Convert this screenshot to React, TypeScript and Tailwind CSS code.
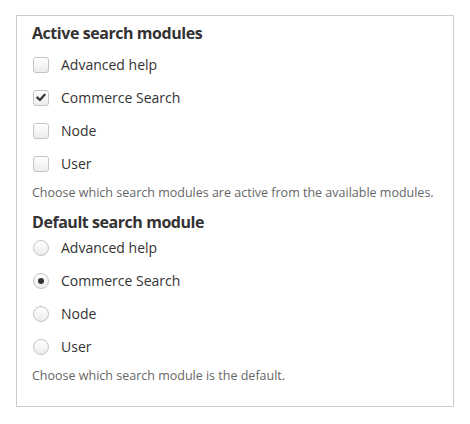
import React from "react";

function Checkbox({ checked }: { checked?: boolean }) {
  return (
    <span className="flex h-[16px] w-[16px] shrink-0 items-center justify-center rounded-[3px] border border-[#c4c4c4] bg-gradient-to-b from-[#ffffff] to-[#ececec] shadow-[inset_0_1px_0_#fff]">
      {checked && (
        <svg width="10" height="9" viewBox="0 0 10 9">
          <path d="M1.4 4.6 L3.9 7 L8.6 1.8" fill="none" stroke="#3a3a3a" strokeWidth="2.4" strokeLinecap="round" strokeLinejoin="round" />
        </svg>
      )}
    </span>
  );
}

function Radio({ checked }: { checked?: boolean }) {
  return (
    <span className="flex h-[16px] w-[16px] shrink-0 items-center justify-center rounded-full border border-[#c4c4c4] bg-gradient-to-b from-[#ffffff] to-[#ececec]">
      {checked && <span className="h-[6px] w-[6px] rounded-full bg-[#333]" />}
    </span>
  );
}

const items = ["Advanced help", "Commerce Search", "Node", "User"];

export default function App() {
  return (
    <div className="h-[424px] w-[470px] bg-white pl-[16px] pt-[15px]" style={{ fontFamily: '"Open Sans", sans-serif' }}>
      <div className="flex w-[438px] flex-col border border-[#cccccc] pb-[21px] pl-[15px] pt-[6px] text-[#333]">
        <div className="h-[22px] text-[16px] font-bold leading-[22px] tracking-[-0.45px]">Active search modules</div>
        <div className="mt-[4px] flex flex-col">
          {items.map((it, i) => (
            <label key={it} className="flex h-[33px] items-center gap-[12px] pl-[1px] text-[14px]">
              <Checkbox checked={i === 1} />
              <span>{it}</span>
            </label>
          ))}
        </div>
        <div className="mt-[4px] h-[18px] text-[12.5px] leading-[18px] text-[#666]">
          Choose which search modules are active from the available modules.
        </div>
        <div className="mt-[11px] h-[18px] text-[16px] font-bold leading-[18px] tracking-[-0.45px]">Default search module</div>
        <div className="flex flex-col">
          {items.map((it, i) => (
            <label key={it} className="flex h-[33px] items-center gap-[12px] pl-[1px] text-[14px]">
              <Radio checked={i === 1} />
              <span>{it}</span>
            </label>
          ))}
        </div>
        <div className="mt-[4px] h-[18px] text-[12.5px] leading-[18px] text-[#666]">
          Choose which search module is the default.
        </div>
      </div>
    </div>
  );
}
